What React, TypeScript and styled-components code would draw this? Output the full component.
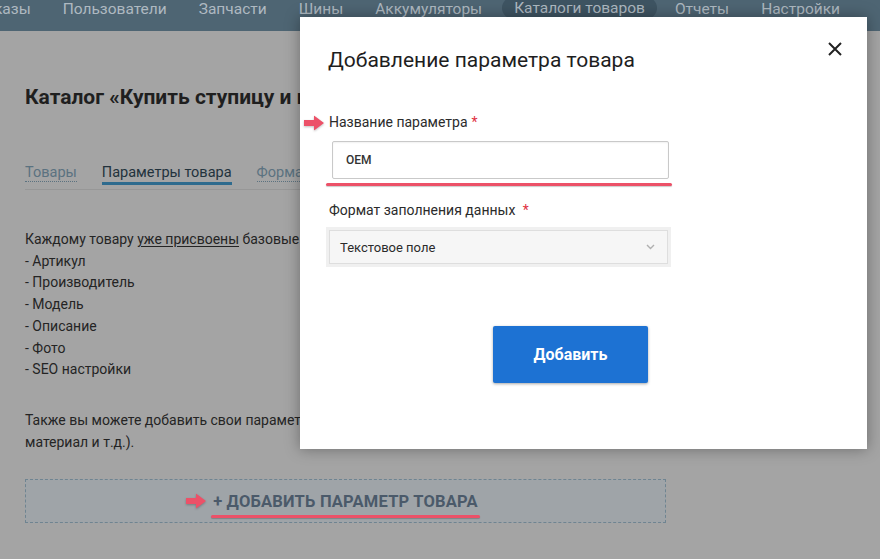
import React from "react";
import styled, { createGlobalStyle } from "styled-components";

const GlobalStyle = createGlobalStyle`
  html, body {
    margin: 0;
    padding: 0;
    background: #a4a4a4;
    font-family: Roboto, "Liberation Sans", Arial, sans-serif;
  }
  * { box-sizing: border-box; }
`

const Page = styled.div`
  position: relative;
  width: 880px;
  height: 559px;
  overflow: hidden;
  background: #a4a4a4;
`

const Nav = styled.nav`
  display: flex;
  justify-content: flex-end;
  align-items: flex-start;
  height: 31px;
  padding-right: 24px;
  background: #4e6573;
  overflow: hidden;
`

const NavItem = styled.div<{ $active?: boolean }>`
  flex-shrink: 0;
  white-space: nowrap;
  font-size: 15.5px;
  line-height: 19px;
  color: #aeb9c1;
  padding: ${p => (p.$active ? "2px 12px 1px" : "0 16px")};
  margin: ${p => (p.$active ? "-3px 2px 0 4px" : "0")};
  border-radius: 12px;
  background: ${p => (p.$active ? "#3e5462" : "transparent")};
`

const Content = styled.main`
  padding: 0 214px 0 25px;
`

const Title = styled.h1`
  margin: 54px 0 0;
  font-size: 21px;
  line-height: 24px;
  font-weight: 700;
  color: #1f1f1f;
  white-space: nowrap;
`

const Tabs = styled.div`
  display: flex;
  gap: 25px;
  margin-top: 55px;
  padding-bottom: 4px;
  border-bottom: 1px solid #979797;
`

const Tab = styled.div<{ $active?: boolean }>`
  font-size: 14.5px;
  line-height: 17px;
  white-space: nowrap;
  color: ${p => (p.$active ? "#22323c" : "#5b7280")};
  padding-bottom: ${p => (p.$active ? "1px" : "0")};
  border-bottom: ${p => (p.$active ? "3px solid #2e6b8e" : "1px dotted #5b7280")};
  align-self: flex-start;
`

const Text = styled.div`
  margin-top: 39px;
  font-size: 14px;
  line-height: 21.7px;
  color: #242424;

  u { text-decoration: underline; text-underline-offset: 2px; }
  p { margin: 0; }
  p + p { margin-top: 29.5px; }
`

const AddBox = styled.div`
  display: flex;
  justify-content: center;
  align-items: center;
  height: 44px;
  margin-top: 25px;
  background: #9fa4a8;
  border: 1px dashed #6f8491;
`

const AddText = styled.span`
  position: relative;
  font-size: 16.5px;
  font-weight: 700;
  letter-spacing: 0.2px;
  color: #4b5a6a;
  text-transform: uppercase;
  margin-top: 1px;
`

const Mark = styled.span`
  position: absolute;
  left: -2px;
  right: -2px;
  bottom: -7px;
  height: 3px;
  border-radius: 2px;
  background: #ec5168;
  box-shadow: 0 1px 1px rgba(0, 0, 0, 0.2);
`

const Pointer = styled.svg<{ $left: number }>`
  position: absolute;
  left: ${p => p.$left}px;
  top: 50%;
  transform: translateY(-50%);
  filter: drop-shadow(0 1px 1px rgba(0, 0, 0, 0.25));
`

const Modal = styled.div`
  position: absolute;
  left: 300px;
  top: 17px;
  width: 567px;
  height: 432px;
  padding: 31px 54px 0 28px;
  background: #fff;
  box-shadow: 0 0 14px rgba(0, 0, 0, 0.35);
`

const ModalTitle = styled.h2`
  margin: 0;
  font-size: 21px;
  line-height: 24px;
  font-weight: 400;
  color: #1e1e1e;
`

const Close = styled.button`
  position: absolute;
  top: 25px;
  right: 25px;
  width: 14px;
  height: 14px;
  padding: 0;
  border: 0;
  background: transparent;
  display: flex;
`

const Field = styled.div<{ $top: number }>`
  margin-top: ${p => p.$top}px;
`

const Label = styled.div`
  position: relative;
  font-size: 14px;
  line-height: 17px;
  color: #2b2b2b;
  margin-left: 1px;

  b {
    color: #e0303f;
    font-weight: 400;
    margin-left: 4px;
  }
`

const InputWrap = styled.div`
  position: relative;
  width: 337px;
  margin: 10px 0 0 4px;
`

const Input = styled.div`
  height: 38px;
  display: flex;
  align-items: center;
  padding: 0 13px;
  font-size: 12px;
  font-weight: 500;
  color: #333;
  border: 1px solid #c9c9c9;
  border-radius: 2px;
  box-shadow: inset 0 1px 2px rgba(0, 0, 0, 0.06);
`

const InputMark = styled.span`
  position: absolute;
  left: -6px;
  right: -3px;
  bottom: -7px;
  height: 3px;
  border-radius: 2px;
  background: #ec5168;
  box-shadow: 0 1px 1px rgba(0, 0, 0, 0.2);
`

const Select = styled.div`
  width: 339px;
  height: 34px;
  margin: 11px 0 0 1px;
  display: flex;
  align-items: center;
  justify-content: space-between;
  padding: 0 12px 0 10px;
  font-size: 13px;
  color: #2b2b2b;
  background: #f6f6f6;
  border: 1px solid #dedede;
  box-shadow: 0 0 0 3px #f0f0f0;
`

const Footer = styled.div`
  display: flex;
  justify-content: center;
  margin-top: 62px;
`

const Button = styled.button`
  width: 155px;
  height: 57px;
  border: 0;
  border-radius: 2px;
  background: #1d72d3;
  color: #fff;
  font-family: inherit;
  font-size: 16px;
  font-weight: 700;
  box-shadow: 0 1px 3px rgba(0, 0, 0, 0.35);
`

const Arrow = ({ left }: { left: number }) => (
  <Pointer $left={left} width="20" height="15" viewBox="0 0 20 15">
    <polygon points="0,4.5 10,4.5 10,0 20,7.5 10,15 10,10.5 0,10.5" fill="#ec5168" />
  </Pointer>
)

const navItems = ["Заказы", "Пользователи", "Запчасти", "Шины", "Аккумуляторы", "Каталоги товаров", "Отчеты", "Настройки"];

const App = () => {
  return <>
    <GlobalStyle />
    <Page>
      <Nav>
        {navItems.map(item => (
          <NavItem key={item} $active={item === "Каталоги товаров"}>{item}</NavItem>
        ))}
      </Nav>

      <Content>
        <Title>Каталог «Купить ступицу и подшипник»</Title>

        <Tabs>
          <Tab>Товары</Tab>
          <Tab $active>Параметры товара</Tab>
          <Tab>Формат</Tab>
        </Tabs>

        <Text>
          <p>
            Каждому товару <u>уже присвоены</u> базовые параметры:<br />
            - Артикул<br />
            - Производитель<br />
            - Модель<br />
            - Описание<br />
            - Фото<br />
            - SEO настройки
          </p>
          <p>
            Также вы можете добавить свои параметры (например: цвет, размер,<br />
            материал и т.д.).
          </p>
        </Text>

        <AddBox>
          <AddText>
            <Arrow left={-27} />
            + Добавить параметр товара
            <Mark />
          </AddText>
        </AddBox>
      </Content>

      <Modal>
        <ModalTitle>Добавление параметра товара</ModalTitle>
        <Close aria-label="Закрыть">
          <svg width="14" height="14" viewBox="0 0 14 14">
            <path d="M1 1 L13 13 M13 1 L1 13" stroke="#222" strokeWidth="2" />
          </svg>
        </Close>

        <Field $top={42}>
          <Label>
            <Arrow left={-25} />
            Название параметра<b>*</b>
          </Label>
          <InputWrap>
            <Input>OEM</Input>
            <InputMark />
          </InputWrap>
        </Field>

        <Field $top={23}>
          <Label>Формат заполнения данных <b>*</b></Label>
          <Select>
            <span>Текстовое поле</span>
            <svg width="9" height="6" viewBox="0 0 9 6">
              <path d="M1 1 L4.5 4.5 L8 1" fill="none" stroke="#b0b0b0" strokeWidth="1.4" />
            </svg>
          </Select>
        </Field>

        <Footer>
          <Button>Добавить</Button>
        </Footer>
      </Modal>
    </Page>
  </>
}

export default App;
